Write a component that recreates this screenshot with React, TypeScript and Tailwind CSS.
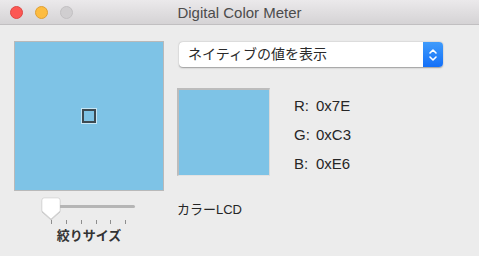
const JP = "font-['Helvetica_Neue','Liberation_Sans','Noto_Sans_CJK_JP',sans-serif]";

function TrafficLights() {
  return (
    <div className="flex w-[76px] items-center gap-[12px] pl-[10px]">
      <span className="h-[13px] w-[13px] rounded-full bg-[#fc5753] border border-[#df4744]" />
      <span className="h-[13px] w-[13px] rounded-full bg-[#fdbc40] border border-[#de9f34]" />
      <span className="h-[13px] w-[13px] rounded-full bg-[#d0ced0] border border-[#c2c0c2]" />
    </div>
  );
}

function ApertureSlider() {
  const ticks = [14, 29, 44, 59, 73, 88];
  return (
    <svg width="104" height="30" viewBox="0 0 104 30" className="mt-[4px]">
      <defs>
        <filter id="sh" x="-30%" y="-30%" width="160%" height="160%">
          <feDropShadow dx="0" dy="0.6" stdDeviation="0.7" floodColor="#000" floodOpacity="0.35" />
        </filter>
      </defs>
      <rect x="16" y="10" width="82" height="3" rx="1.5" fill="#b5b5b5" />
      {ticks.map((x) => (
        <rect key={x} x={x} y="25" width="1" height="4" fill="#8e8e8e" />
      ))}
      <path
        d="M5 5 Q5 3 7 3 L21 3 Q23 3 23 5 L23 16 L14 24 L5 16 Z"
        fill="#fff"
        stroke="#c8c8c8"
        strokeWidth="0.5"
        filter="url(#sh)"
      />
    </svg>
  );
}

export default function App() {
  return (
    <div className={`w-[479px] h-[256px] overflow-hidden bg-[#ececec] ${JP}`}>
      {/* title bar */}
      <div className="flex h-[25px] items-center border-b border-[#c1bfc1] bg-gradient-to-b from-[#ebe9eb] to-[#d5d3d5]">
        <TrafficLights />
        <div className="flex-1 text-center text-[15px] leading-none text-[#4c4c4c] pt-[1px]">Digital Color Meter</div>
        <div className="w-[76px]" />
      </div>

      <div className="flex pl-[14px] pt-[16px]">
        {/* magnifier + aperture */}
        <div className="flex w-[150px] flex-col items-center">
          <div className="relative h-[150px] w-[150px] border border-[#b9b9b9] bg-[#7ec3e6]">
            <div className="absolute left-[67px] top-[67px] h-[14px] w-[14px] border-2 border-[#3d4a52] outline outline-1 outline-[#c7e6f5]" />
          </div>
          <ApertureSlider />
          <div className="mt-[4px] text-[13px] font-semibold leading-none text-[#333]">絞りサイズ</div>
        </div>

        {/* right side */}
        <div className="ml-[13px] flex flex-col">
          <div className="ml-[2px] mt-[1px] flex h-[25px] w-[264px] overflow-hidden rounded-[4px] bg-white shadow-[0_0.5px_1.5px_rgba(0,0,0,0.35)]">
            <div className="flex-1 pl-[9px] text-[14px] leading-[25px] text-[#2a2a2a]">ネイティブの値を表示</div>
            <div className="flex w-[20px] items-center justify-center bg-gradient-to-b from-[#3f9bfb] to-[#136ff8]">
              <svg width="10" height="16" viewBox="0 0 10 16" fill="none" stroke="#fff" strokeWidth="1.6" strokeLinecap="round" strokeLinejoin="round">
                <path d="M2 6 L5 3 L8 6" />
                <path d="M2 10 L5 13 L8 10" />
              </svg>
            </div>
          </div>

          <div className="mt-[21px] flex">
            <div className="h-[88px] w-[93px] border-t-2 border-l-2 border-r border-b border-t-[#bcbcbc] border-l-[#bcbcbc] border-r-[#dadada] border-b-[#e2e2e2] bg-[#7ec3e6]" />
            <div className="ml-[24px] pt-[3px] grid grid-cols-[22px_auto] text-[15px] leading-[29px] text-[#262626]">
              <span>R:</span>
              <span>0x7E</span>
              <span>G:</span>
              <span>0xC3</span>
              <span>B:</span>
              <span>0xE6</span>
            </div>
          </div>

          <div className="mt-[25px] text-[13px] leading-none text-[#262626]">カラーLCD</div>
        </div>
      </div>
    </div>
  );
}
